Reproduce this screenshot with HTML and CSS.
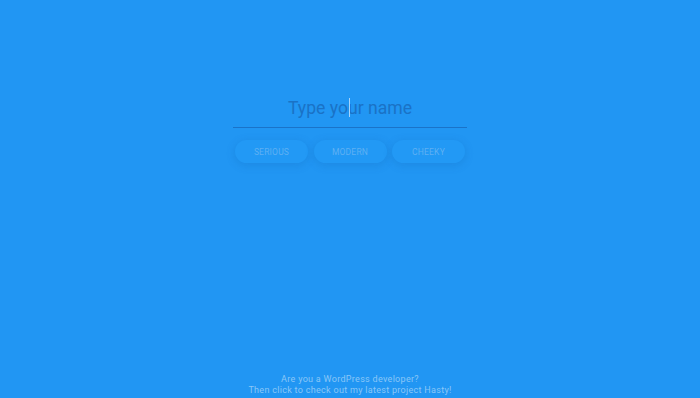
FILE: index.html
```html
<!DOCTYPE html>
<html lang="en">

<head>
  <meta charset="UTF-8" />
  <meta name="viewport" content="width=device-width, initial-scale=1.0" />
  <title>Name Generator</title>
  <link rel="stylesheet" href="styles.css">
</head>

<body>
  <main class="page">
    <div class="form">
      <div class="field">
        <input class="name-input" type="text" placeholder="Type your name">
        <span class="caret"></span>
      </div>
      <div class="styles">
        <button class="style-btn">Serious</button>
        <button class="style-btn">Modern</button>
        <button class="style-btn">Cheeky</button>
      </div>
    </div>
  </main>

  <a class="footer" href="#">Are you a WordPress developer?<br>Then click to check out my latest project Hasty!</a>
</body>

</html>
```

FILE: styles.css
```css
html,
body {
  height: 100%;
}

body {
  margin: 0;
  font-family: Roboto, "Liberation Sans", sans-serif;
  background: #2196f3;
  display: flex;
  flex-direction: column;
  overflow: hidden;
}

.page {
  flex: 1;
  display: flex;
  justify-content: center;
  padding-top: 92px;
}

.form {
  width: 234px;
}

/* Name field with underline */
.field {
  position: relative;
  border-bottom: 1px solid #1a73c9;
}

.name-input {
  display: block;
  width: 100%;
  box-sizing: border-box;
  border: 0;
  outline: 0;
  background: transparent;
  font-family: inherit;
  font-size: 17.6px;
  text-align: center;
  padding: 6px 0 9px;
  color: #1a72c6;
}

.name-input::placeholder {
  color: #1a72c6;
}

/* mouse I-beam sitting over the field */
.caret {
  position: absolute;
  left: 116px;
  top: 6px;
  width: 1px;
  height: 19px;
  background: #a9d4fa;
}

/* Style choice pills */
.styles {
  display: flex;
  justify-content: space-between;
  padding: 12px 2px 0;
}

.style-btn {
  width: 73px;
  height: 23px;
  border: 0;
  border-radius: 12px;
  background: #2299f5;
  box-shadow: 0 2px 10px rgba(10, 80, 150, 0.18);
  color: #5eb0f3;
  font-family: inherit;
  font-size: 8.5px;
  text-transform: uppercase;
  letter-spacing: 0.2px;
  padding: 1px 0 0;
  cursor: pointer;
}

.footer {
  display: block;
  text-align: center;
  font-size: 9px;
  line-height: 11px;
  letter-spacing: 0.3px;
  color: #8ac6f7;
  text-decoration: none;
  padding-bottom: 2px;
}
```
